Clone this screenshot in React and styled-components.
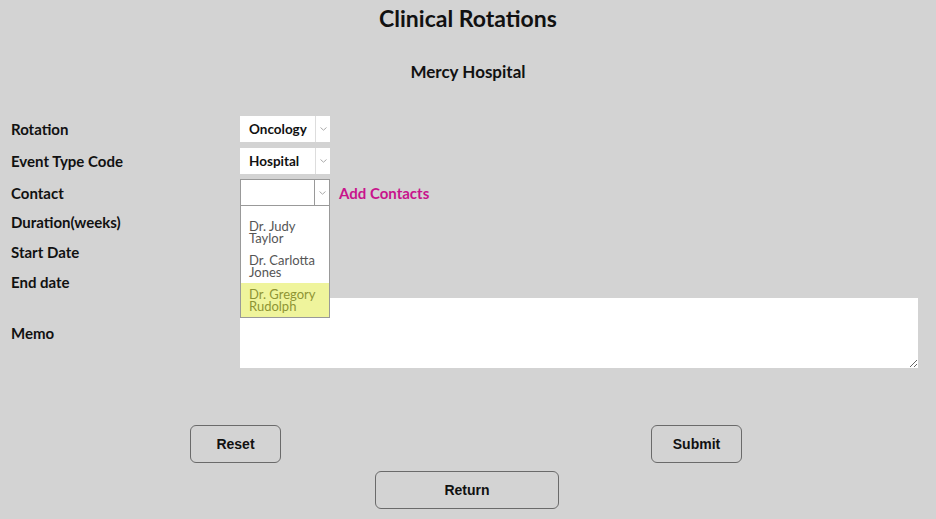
import React from "react";
import styled, { createGlobalStyle } from "styled-components";

const Global = createGlobalStyle`
  html, body { margin: 0; padding: 0; background: #d3d3d3; }
  body { font-family: Lato, "Noto Sans", sans-serif; color: #111; }
`;

const Page = styled.div`
  width: 936px;
  height: 519px;
  background: #d3d3d3;
  position: relative;
`;

const Title = styled.h1`
  margin: 0;
  padding-top: 5px;
  height: 31px;
  line-height: 26px;
  text-align: center;
  font-size: 23px;
  font-weight: 700;
  color: #111;
`;

const Subtitle = styled.h2`
  margin: 0;
  padding-top: 26px;
  line-height: 20px;
  text-align: center;
  font-size: 17px;
  font-weight: 700;
`;

const Form = styled.div`
  margin-top: 34px;
  display: grid;
  grid-template-columns: 240px 1fr;
  grid-template-rows: 32px 31px 28px 30px 30px 31px 70px;
  padding-right: 18px;
`;

const Label = styled.div`
  padding-left: 11px;
  height: ${(p) => p.$h || 30}px;
  display: flex;
  align-items: center;
  font-size: 15px;
  font-weight: 700;
  color: #111;
`;

const Field = styled.div`
  height: ${(p) => p.$h || 30}px;
  display: flex;
  align-items: center;
  gap: 9px;
  position: relative;
`;

const Select = styled.div`
  box-sizing: border-box;
  width: 90px;
  height: 100%;
  background: #fff;
  border: ${(p) => (p.$bordered ? "1px solid #999" : "none")};
  display: flex;
  align-items: stretch;
`;

const SelectValue = styled.div`
  flex: 1;
  padding-left: ${(p) => (p.$bordered ? "8px" : "9px")};
  display: flex;
  align-items: center;
  font-size: 13.5px;
  font-weight: 700;
  color: #111;
`;

const Arrow = styled.div`
  width: 14px;
  border-left: 1px solid ${(p) => (p.$bordered ? "#999" : "#ddd")};
  display: flex;
  align-items: center;
  justify-content: center;
`;

const AddLink = styled.a`
  font-size: 15px;
  font-weight: 700;
  color: #c8148c;
  text-decoration: none;
  cursor: pointer;
`;

const Dropdown = styled.ul`
  position: absolute;
  left: 0;
  top: 27px;
  z-index: 5;
  box-sizing: border-box;
  width: 90px;
  margin: 0;
  padding: 9px 0 0;
  list-style: none;
  background: #fff;
  border: 1px solid #999;
  border-top: none;
`;

const Option = styled.li`
  box-sizing: border-box;
  height: 34px;
  padding: 5px 4px 0 8px;
  font-size: 13px;
  line-height: 12px;
  color: ${(p) => (p.$active ? "#8e9434" : "#555")};
  background: ${(p) => (p.$active ? "#eff49c" : "#fff")};
`;

const Memo = styled.textarea`
  box-sizing: border-box;
  width: 100%;
  height: 70px;
  border: none;
  outline: none;
  background: #fff;
  font-family: inherit;
  padding: 2px;
  margin: 0;
  display: block;
`;

const ButtonRow = styled.div`
  display: flex;
  justify-content: space-between;
  padding: 0 194px 0 190px;
  margin-top: 57px;
`;

const Button = styled.button`
  box-sizing: border-box;
  width: ${(p) => p.$w || 91}px;
  height: 38px;
  background: transparent;
  border: 1px solid #6a6a6a;
  border-radius: 6px;
  font-family: "Liberation Sans", Arial, sans-serif;
  font-size: 14px;
  font-weight: 700;
  color: #111;
  cursor: pointer;
`;

const Center = styled.div`
  display: flex;
  justify-content: center;
  margin-top: 8px;
  padding-right: 2px;
`;

const Chevron = ({ color = "#aaa" }) => (
  <svg width="7" height="4" viewBox="0 0 7 4">
    <path d="M0.5 0.5 L3.5 3.2 L6.5 0.5" fill="none" stroke={color} strokeWidth="1" />
  </svg>
);

const SelectBox = ({ value, bordered }) => (
  <Select $bordered={bordered}>
    <SelectValue $bordered={bordered}>{value}</SelectValue>
    <Arrow $bordered={bordered}>
      <Chevron />
    </Arrow>
  </Select>
);

export default function App() {
  return (
    <Page>
      <Global />
      <Title>Clinical Rotations</Title>
      <Subtitle>Mercy Hospital</Subtitle>
      <Form>
        <Label $h={26}>Rotation</Label>
        <Field $h={26}>
          <SelectBox value="Oncology" />
        </Field>
        <Label $h={26}>Event Type Code</Label>
        <Field $h={26}>
          <SelectBox value="Hospital" />
        </Field>
        <Label $h={27}>Contact</Label>
        <Field $h={27}>
          <SelectBox value="" bordered />
          <AddLink>Add Contacts</AddLink>
          <Dropdown>
            <Option>Dr. Judy<br />Taylor</Option>
            <Option>Dr. Carlotta<br />Jones</Option>
            <Option $active>Dr. Gregory<br />Rudolph</Option>
          </Dropdown>
        </Field>
        <Label>Duration(weeks)</Label>
        <Field />
        <Label>Start Date</Label>
        <Field />
        <Label>End date</Label>
        <Field />
        <Label $h={70}>Memo</Label>
        <Field $h={70}>
          <Memo />
        </Field>
      </Form>
      <ButtonRow>
        <Button>Reset</Button>
        <Button>Submit</Button>
      </ButtonRow>
      <Center>
        <Button $w={184}>Return</Button>
      </Center>
    </Page>
  );
}
